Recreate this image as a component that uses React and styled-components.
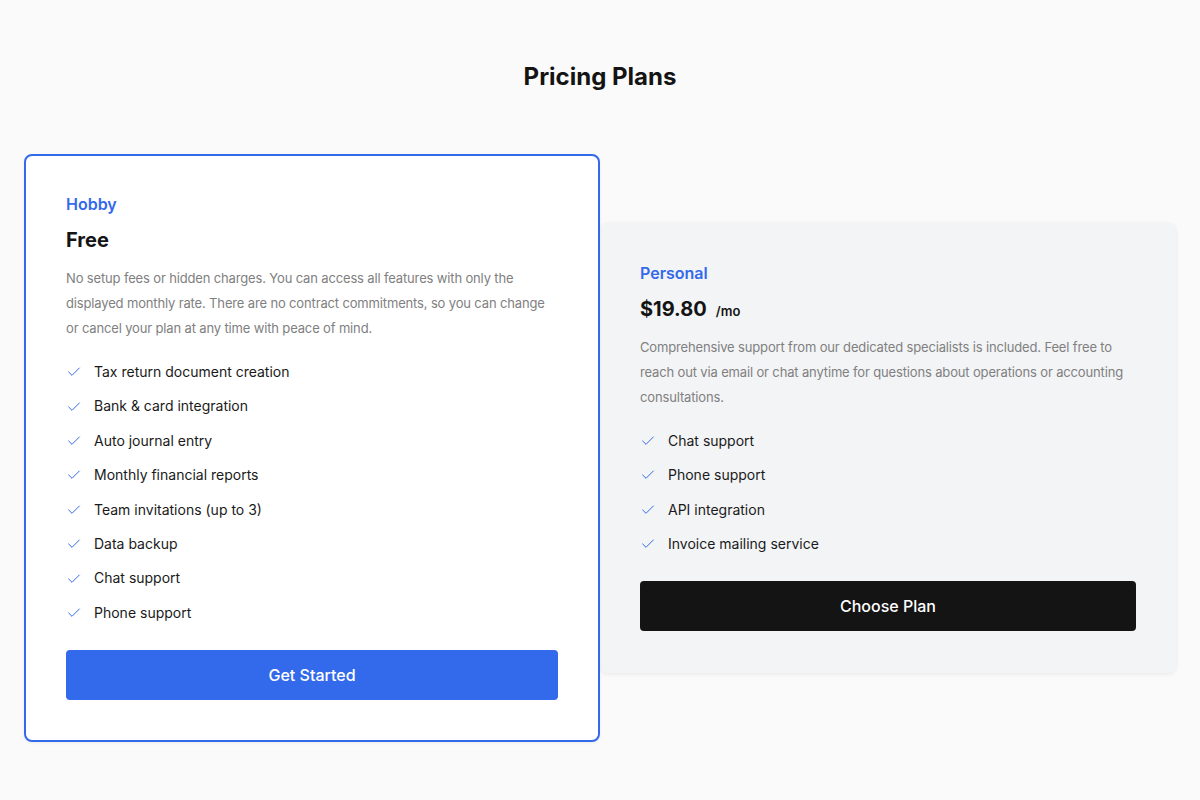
import styled, { createGlobalStyle } from "styled-components"
import { Check } from "lucide-react"

const GlobalStyle = createGlobalStyle`
  * { box-sizing: border-box; }
  body {
    margin: 0;
    background: #fafafa;
    font-family: Inter, "Noto Sans", sans-serif;
    color: #141414;
    -webkit-font-smoothing: antialiased;
  }
`

const Page = styled.div`
  padding: 61px 24px 40px;
`

const Title = styled.h1`
  margin: 0 0 61px;
  text-align: center;
  font-size: 24px;
  line-height: 32px;
  font-weight: 700;
  color: #141414;
`

const Plans = styled.div`
  display: flex;
  align-items: center;
  max-width: 1152px;
  margin: 0 auto;
`

const Card = styled.div`
  flex: 0 0 50%;
  position: relative;
  padding: ${p => (p.$featured ? "40px" : "42px 40px")};
  border-radius: 8px;
  background: ${p => (p.$featured ? "#ffffff" : "#f3f4f6")};
  border: ${p => (p.$featured ? "2px solid #3369eb" : "none")};
  box-shadow: ${p => (p.$featured ? "0 1px 3px rgba(0,0,0,0.06)" : "0 1px 4px rgba(0,0,0,0.08)")};
  z-index: ${p => (p.$featured ? 2 : 1)};
`

const PlanName = styled.div`
  font-size: 16px;
  line-height: 16px;
  font-weight: 600;
  color: #3369eb;
`

const PriceRow = styled.div`
  display: flex;
  align-items: baseline;
  gap: 9px;
  margin-top: 14px;
`

const Price = styled.span`
  font-size: 20px;
  line-height: 28px;
  font-weight: 700;
  color: #141414;
`

const Per = styled.span`
  font-size: 13px;
  font-weight: 600;
  color: #141414;
`

const Description = styled.p`
  margin: 12px 0 20px;
  font-size: 13px;
  line-height: 25px;
  letter-spacing: -0.15px;
  color: #808080;
`

const Features = styled.ul`
  list-style: none;
  margin: 0 0 26px;
  padding: 0;
  display: flex;
  flex-direction: column;
  gap: 12px;
`

const Feature = styled.li`
  display: flex;
  align-items: center;
  gap: 12px;
  font-size: 14px;
  line-height: 22.4px;
  color: #1a1a1a;

  svg {
    flex-shrink: 0;
    color: #3369eb;
  }
`

const Button = styled.button`
  display: block;
  width: 100%;
  height: 50px;
  border: none;
  border-radius: 4px;
  font-family: inherit;
  font-size: 16px;
  font-weight: 500;
  color: #fff;
  background: ${p => (p.$variant === "dark" ? "#141414" : "#3369eb")};
  cursor: pointer;
`

const plans = [
  {
    name: "Hobby",
    price: "Free",
    description:
      "No setup fees or hidden charges. You can access all features with only the displayed monthly rate. There are no contract commitments, so you can change or cancel your plan at any time with peace of mind.",
    features: [
      "Tax return document creation",
      "Bank & card integration",
      "Auto journal entry",
      "Monthly financial reports",
      "Team invitations (up to 3)",
      "Data backup",
      "Chat support",
      "Phone support",
    ],
    cta: "Get Started",
    featured: true,
  },
  {
    name: "Personal",
    price: "$19.80",
    per: "/mo",
    description:
      "Comprehensive support from our dedicated specialists is included. Feel free to reach out via email or chat anytime for questions about operations or accounting consultations.",
    features: ["Chat support", "Phone support", "API integration", "Invoice mailing service"],
    cta: "Choose Plan",
    variant: "dark",
  },
]

const App = () => {
  return (
    <Page>
      <GlobalStyle />
      <Title>Pricing Plans</Title>
      <Plans>
        {plans.map(plan => (
          <Card key={plan.name} $featured={plan.featured}>
            <PlanName>{plan.name}</PlanName>
            <PriceRow>
              <Price>{plan.price}</Price>
              {plan.per && <Per>{plan.per}</Per>}
            </PriceRow>
            <Description>{plan.description}</Description>
            <Features>
              {plan.features.map(f => (
                <Feature key={f}>
                  <Check size={16} strokeWidth={1.5} />
                  {f}
                </Feature>
              ))}
            </Features>
            <Button $variant={plan.variant}>{plan.cta}</Button>
          </Card>
        ))}
      </Plans>
    </Page>
  )
}

export default App
